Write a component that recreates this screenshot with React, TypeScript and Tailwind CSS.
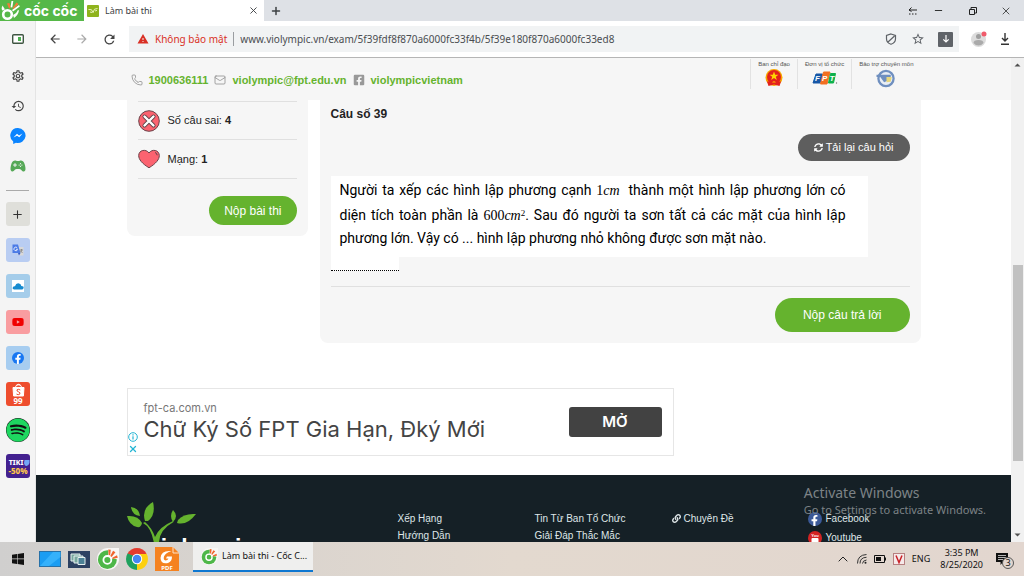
import type { ReactNode } from "react";
import { FaFacebookF, FaFacebookSquare, FaLink, FaSpotify, FaSyncAlt, FaYoutube } from "react-icons/fa";
import { IoGameController } from "react-icons/io5";
import {
  MdArrowBack,
  MdArrowForward,
  MdHistory,
  MdOutlineSettings,
  MdRefresh,
  MdStarBorder,
  MdWarning,
} from "react-icons/md";
import { Mail, Minus, Phone, Plus, X } from "lucide-react";

const footerLinks = [
  ["Xếp Hạng", "Hướng Dẫn"],
  ["Tin Từ Ban Tổ Chức", "Giải Đáp Thắc Mắc"],
];

// colour version for the taskbar, white line version for the tab strip badge
function CocCocMark({ className, white = false }: { className?: string; white?: boolean }) {
  if (white) {
    return (
      <svg viewBox="0 0 20 20" className={className} aria-hidden="true">
        <circle cx="7.500" cy="13.500" r="4.300" fill="none" stroke="#fff" strokeWidth="2.600" />
        <path d="M2 9.500Q1 7 2.500 4.500L5 8.500z" fill="#fff" />
        <path d="M11.500 0l1.800 0-1 6.500-1.800-.3zM12 9l7-5 .8 1.500-6.800 5zM13 14q4-2 5-5l1 .5q-1 5-5 7.500z" fill="#fff" />
        <path d="M7 2.500l2.500-.5 1 5-1.500.5zM12.500 7.200L16.500 1.500l2 1.500-5 5z" fill="#f4793a" />
      </svg>
    );
  }
  return (
    <svg viewBox="0 0 24 24" className={className} aria-hidden="true">
      <circle cx="12" cy="12" r="12" fill="#f7f7f5" />
      <circle cx="11.300" cy="12.700" r="10.300" fill="#4db748" />
      <path d="M12 11L12.500 0 24 0V12.500z" fill="#f7f7f5" />
      <circle cx="11.300" cy="13" r="4.300" fill="#4db748" stroke="#fff" strokeWidth="2" />
      <path d="M12.300 1.500l2.700.3-.7 6-1.600-.2zM17.500 3l2.600 1.700-4.200 5-1.400-1zM21.800 8l.9 2.500-5.500 1.500-.5-1.500z" fill="#f0642d" />
    </svg>
  );
}

function TabStrip() {
  return (
    <div className="flex h-[21px] shrink-0 items-stretch bg-[#dee1e6] text-[#3c4043]">
      <div className="flex w-[84px] items-center gap-1 overflow-hidden bg-[#56b848] text-white">
        <CocCocMark white className="size-5" />
        <span className="font-['Inter',sans-serif] text-[14px] leading-none font-bold">cốc cốc</span>
      </div>
      <div className="flex w-[180px] items-center gap-[6px] bg-white pr-[5px] pl-[3px]">
        <svg viewBox="0 0 12 12" className="size-3" aria-hidden="true">
          <rect width="12" height="12" rx="1" fill="#8fb31d" />
          <path d="M1.500 4.500l3 .2 1.500 3 1.500-3.500 3-.7M3 7l2 .5M8 6l2-.6" stroke="#e6f2b8" strokeWidth="1" fill="none" />
        </svg>
        <span className="flex-1 text-[9px]">Làm bài thi</span>
        <button aria-label="Đóng thẻ">
          <X className="size-[11px]" />
        </button>
      </div>
      <button aria-label="Thẻ mới" className="px-[6px]">
        <Plus className="size-3" strokeWidth={3} />
      </button>
      <div className="ml-auto flex items-center gap-[14px] pr-3 text-[#222]">
        <svg viewBox="0 0 12 12" className="size-3" aria-hidden="true">
          <path d="M2 5h8M4.500 2.500L2 5l2.500 1.500M2 9h1.500M5 9h1.500M8 9h1.500" stroke="currentColor" fill="none" />
        </svg>
        <button aria-label="Thu nhỏ">
          <Minus className="size-[11px]" strokeWidth={2} />
        </button>
        <button aria-label="Khôi phục" className="ml-[10px]">
          <svg viewBox="0 0 10 10" className="size-[10px]">
            <path d="M1.500 3.500h5v5h-5zM3 3.500V1.500h5.500V7H6.500" stroke="currentColor" fill="none" />
          </svg>
        </button>
        <button aria-label="Đóng" className="ml-2">
          <X className="size-3" strokeWidth={1.5} />
        </button>
      </div>
    </div>
  );
}

function AddressBar() {
  return (
    <div className="flex h-[37px] shrink-0 items-center border-b border-[#b5b5b5] bg-white pr-[13px] text-[#5f6368]">
      <div className="flex w-[93px] items-center gap-[13px] pl-3">
        <button aria-label="Quay lại">
          <MdArrowBack className="size-[14px] text-[#444]" />
        </button>
        <button aria-label="Tiến">
          <MdArrowForward className="size-[14px] text-[#aaa]" />
        </button>
        <button aria-label="Tải lại">
          <MdRefresh className="size-[15px] text-[#444]" />
        </button>
      </div>
      <div className="flex h-[26px] flex-1 items-center bg-[#f1f3f4] pr-[6px] pl-2 text-[10px]">
        <MdWarning className="size-3 text-[#d93025]" />
        <span className="ml-[6px] text-[#d93025]">Không bảo mật</span>
        <span className="mx-[6px] h-[14px] w-px bg-[#9a9da1]" />
        <input
          aria-label="Địa chỉ"
          readOnly
          className="min-w-0 flex-1 bg-transparent text-[#4a4d51] outline-none"
          defaultValue="www.violympic.vn/exam/5f39fdf8f870a6000fc33f4b/5f39e180f870a6000fc33ed8"
        />
        <svg viewBox="0 0 12 12" className="mx-[7px] size-3" aria-hidden="true">
          <path d="M6 1l4.500 1.500v3.300C10.500 8.500 8.500 10.500 6 11.300 3.500 10.500 1.500 8.500 1.500 5.800V2.500zM3 9l6.500-6" stroke="currentColor" strokeWidth="1.200" fill="none" />
        </svg>
        <button aria-label="Đánh dấu trang" className="mx-[7px]">
          <MdStarBorder className="size-[14px]" />
        </button>
        <button aria-label="Tải video" className="ml-[6px] flex size-[15px] items-center justify-center rounded-[1px] bg-[#5f6368]">
          <svg viewBox="0 0 10 10" className="size-[10px]">
            <path d="M5 1v7M2.300 5.300L5 8l2.700-2.700" stroke="#fff" strokeWidth="1.200" fill="none" />
          </svg>
        </button>
      </div>
      <svg viewBox="0 0 16 16" className="ml-3 size-4" aria-hidden="true">
        <circle cx="7.500" cy="8.500" r="7.500" fill="#dcdcdc" />
        <circle cx="7.500" cy="5.500" r="2.500" fill="#9e9e9e" />
        <path d="M2.500 12q0-3 5-3t5 3q-2 2.500-5 2.500t-5-2.500" fill="#aaa" />
        <circle cx="13" cy="3" r="2.500" fill="#f05b6b" />
      </svg>
      <button aria-label="Tải xuống" className="ml-3">
        <svg viewBox="0 0 12 12" className="size-3">
          <path d="M6 0v8M3 5l3 3 3-3M2 11.200h8" stroke="#333" strokeWidth="1.400" fill="none" />
        </svg>
      </button>
    </div>
  );
}

function SideTool({ label, children }: { label: string; children: ReactNode }) {
  return (
    <button aria-label={label} className="flex h-[30px] items-center justify-center text-[#444]">
      {children}
    </button>
  );
}

function Sidebar() {
  const tile = "flex size-6 shrink-0 items-center justify-center overflow-hidden rounded-[3px]";
  return (
    <aside className="flex w-9 shrink-0 flex-col border-r border-[#e4e4e4] bg-[#f4f4f4]">
      <button aria-label="Thanh bên" className="mb-1 flex h-9 shrink-0 items-center justify-center">
        <svg viewBox="0 0 12 10" className="h-[10px] w-3">
          <rect x=".7" y=".7" width="10.600" height="8.600" rx="1" stroke="#3f5542" strokeWidth="1.400" fill="#fff" />
          <rect x="6" y="3" width="3" height="4" fill="#4caf50" />
        </svg>
      </button>
      <SideTool label="Cài đặt">
        <MdOutlineSettings className="size-[14px]" />
      </SideTool>
      <SideTool label="Lịch sử">
        <MdHistory className="size-[14px]" />
      </SideTool>
      <SideTool label="Messenger">
        <svg viewBox="0 0 16 16" className="size-4">
          <path d="M8 0a7.800 7.500 0 1 1-2 14.800L3.200 16v-2.600A7.500 7.500 0 0 1 8 0z" fill="#0a84ff" />
          <path d="M3.500 9.500L7 5.800l2 1.700 3.500-2L9.300 9.300 7 7.700z" fill="#fff" />
        </svg>
      </SideTool>
      <SideTool label="Trò chơi">
        <IoGameController className="size-4 text-[#55a857]" />
      </SideTool>
      <hr className="mx-[6px] mt-[9px] mb-[11px] border-[#aaa]" />
      <div className="flex flex-col items-center gap-3">
        <button aria-label="Thêm" className={`${tile} bg-[#dfdfda]`}>
          <Plus className="size-[13px] text-[#333]" />
        </button>
        <button aria-label="Google Dịch" className={`${tile} bg-[#b9cdf2]`}>
          <svg viewBox="0 0 12 12" className="size-3">
            <path d="M5 3h6.500v8.500H7z" fill="#d8d8d8" />
            <path d="M.5.500h5.500l2.500 8.500H.500z" fill="#4c7be6" />
            <path d="M5.300 4A1.800 1.800 0 1 0 5.500 5.300H4" stroke="#fff" strokeWidth=".8" fill="none" />
            <path d="M8 6h3M9.500 5v1q-.5 2-1.500 2.500M8.700 7l1.800 2" stroke="#777" strokeWidth=".7" fill="none" />
            <path d="M6 9h2.500L7 11.500z" fill="#3058c7" />
          </svg>
        </button>
        <button aria-label="Thời tiết" className={`${tile} bg-[#a5cdea]`}>
          <svg viewBox="0 0 12 12" className="size-3">
            <rect width="12" height="12" fill="#fff" />
            <path d="M2 9.500Q0 9 .8 7.200 1.500 6 3 6.200 4 2.800 7 3.400q2 .4 2.300 2.700Q12 6.200 11.600 8q-.3 1.500-2 1.500z" fill="#168bd0" />
          </svg>
        </button>
        <button aria-label="YouTube" className={`${tile} bg-[#f99da0]`}>
          <FaYoutube className="size-3 text-[#f00000]" />
        </button>
        <button aria-label="Facebook" className={`${tile} bg-[#a7cdf0]`}>
          <span className="flex size-3 items-end justify-center rounded-full bg-[#1877f2]">
            <FaFacebookF className="size-[10px] text-white" />
          </span>
        </button>
        <button aria-label="Shopee" className={`${tile} bg-[#ee4d2d]`}>
          <svg viewBox="0 0 24 24" className="size-6">
            <path d="M7 5.500h11l-.6 8.500H7.600zM9.500 5.500Q10 2.300 12.500 2.300T15.500 5.500" fill="#fff" stroke="#fff" />
            <path d="M9.800 5Q10.500 3.200 12.500 3.200t2.700 1.800" fill="#ee4d2d" />
            <path d="M14.300 8Q12.500 6.800 11 7.800q-.5 1.500 1.500 2 2.200.8 1.300 2.300-1.500 1.200-3.300 0" fill="none" stroke="#ee4d2d" />
            <text x="12" y="22" textAnchor="middle" fontSize="8" fontWeight="700" fill="#fff">99</text>
          </svg>
        </button>
        <button aria-label="Spotify" className="flex size-6 items-center justify-center rounded-full bg-[#111]">
          <FaSpotify className="size-6 text-[#1ed760]" />
        </button>
        <button aria-label="Tiki" className={`${tile} bg-[#43218f]`}>
          <svg viewBox="0 0 24 24" className="size-6">
            <path d="M18.500 6h5v3q-1 3-3 3t-2.500-3z" fill="#74a7f5" />
            <text x="10" y="11" textAnchor="middle" fontSize="7" fontWeight="800" fill="#fff">TIKI</text>
            <text x="12" y="20" textAnchor="middle" fontSize="8" fontWeight="800" fill="#fdc64b">-50%</text>
          </svg>
        </button>
      </div>
    </aside>
  );
}

function Partner({ label, children }: { label: string; children: ReactNode }) {
  return (
    <div className="flex h-[30px] flex-col items-center border-l border-[#e2e2e2] px-[7px]">
      <span className="text-[6px] leading-[10px] text-[#555]">{label}</span>
      {children}
    </div>
  );
}

function SiteHeader() {
  return (
    <header className="h-[42px] shrink-0 bg-[#f6f6f6]">
      <div className="mx-auto flex max-w-[794px] items-start justify-between pl-1">
        <div className="flex items-center gap-[6px] pt-[13px] text-[11px] leading-[18px] font-bold text-[#65b32e]">
          <Phone className="size-3 text-[#888]" strokeWidth={1.5} />
          <a href="tel:1900636111">1900636111</a>
          <Mail className="size-3 text-[#888]" strokeWidth={1.5} />
          <a href="mailto:violympic@fpt.edu.vn">violympic@fpt.edu.vn</a>
          <FaFacebookSquare className="size-3 text-[#999]" />
          <a href="#facebook">violympicvietnam</a>
        </div>
        <div className="flex pt-px">
          <Partner label="Ban chỉ đạo">
            <svg viewBox="0 0 18 18" className="size-[18px]">
              <circle cx="9" cy="8.500" r="8.500" fill="#f6a800" />
              <circle cx="9" cy="8" r="7" fill="#e3211c" />
              <path d="M9 2.500l1.200 3.200h3.200l-2.600 2 1 3.200L9 9l-2.800 1.900 1-3.200-2.600-2h3.200z" fill="#ffd500" />
              <path d="M2 12.500h14l-1.500 4.500L9 15.500 3.500 17z" fill="#e3211c" />
              <path d="M7 13.500q2-2.500 4 0" fill="#ffb700" />
            </svg>
          </Partner>
          <Partner label="Đơn vị tổ chức">
            <svg viewBox="0 0 26 18" className="h-[18px] w-[26px]">
              <path d="M4 5h6.500L8 14H1z" fill="#1657a6" stroke="#1657a6" strokeLinejoin="round" />
              <path d="M11.500 3h6.500l-3 12H8.500z" fill="#f26f21" stroke="#f26f21" strokeLinejoin="round" />
              <path d="M18.500 4.500h5L21.500 14h-5z" fill="#0db14b" stroke="#0db14b" strokeLinejoin="round" />
              <g fill="#fff" fontSize="8" fontWeight="700" fontStyle="italic">
                <text x="3" y="12">F</text>
                <text x="10" y="12">P</text>
                <text x="17.500" y="12">T</text>
              </g>
              <circle cx="24.500" cy="14" r=".7" fill="#777" />
            </svg>
          </Partner>
          <Partner label="Bảo trợ chuyên môn">
            <svg viewBox="0 0 20 20" className="h-[19px] w-5">
              <circle cx="10" cy="10" r="8" fill="#e9eef5" stroke="#6f8fbf" strokeWidth="2.400" />
              <path d="M0 6h15v2.500H0zM4 8.500h7v4L8 14z" fill="#6f8fbf" />
              <path d="M10.500 8.500h5.500l-1 5-4.500.5z" fill="#e8d77c" />
            </svg>
          </Partner>
        </div>
      </div>
    </header>
  );
}

function StatusCard() {
  return (
    <section className="flex w-[181px] shrink-0 flex-col self-start rounded-b-lg bg-[#f6f6f6] px-[11px] pb-[11px] text-[11px] text-[#222]">
      <div className="mt-px flex h-[39px] items-center gap-2 border-y border-[#e0e0e0]">
        <svg viewBox="0 0 22 22" className="size-[22px]" aria-hidden="true">
          <circle cx="11" cy="11" r="10.300" fill="#fb6370" stroke="#6b444b" />
          <path d="M6.500 6.500l9 9m0-9l-9 9" stroke="#5c4449" strokeWidth="4" strokeLinecap="round" />
          <path d="M6.500 6.500l9 9m0-9l-9 9" stroke="#fff" strokeWidth="2.400" strokeLinecap="round" />
        </svg>
        <p>
          Số câu sai: <b>4</b>
        </p>
      </div>
      <div className="flex h-[39px] items-center gap-2 border-b border-[#e0e0e0]">
        <svg viewBox="0 0 22 20" className="h-5 w-[22px]" aria-hidden="true">
          <path d="M11 18.800C4 14.500.7 10.500.7 6.500.7 1 8 -.5 11 4c3-4.500 10.300-3 10.300 2.500 0 4-3.300 8-10.300 12.300z" fill="#fb6370" stroke="#6b444b" />
          <path d="M17 3.500q2 .6 2.200 2.800" stroke="#5c4449" fill="none" />
        </svg>
        <p>
          Mạng: <b>1</b>
        </p>
      </div>
      <button className="mt-[17px] h-[29px] self-end rounded-full bg-[#65b32e] px-[15px] text-[12px] text-white">
        Nộp bài thi
      </button>
    </section>
  );
}

function QuestionCard() {
  return (
    <section className="flex min-w-0 flex-1 flex-col rounded-b-lg bg-[#f6f6f6] px-[11px] pb-[11px]">
      <h1 className="mt-[5px] text-[12px] leading-[18px] font-bold text-[#222]">Câu số 39</h1>
      <button className="mt-[11px] flex h-[27px] items-center gap-[3px] self-end rounded-full bg-[#5e5e5e] px-4 text-[11px] text-white">
        <FaSyncAlt className="size-[9px]" />
        Tải lại câu hỏi
      </button>
      <div className="mt-[15px] mr-[42px] bg-white pt-[3px] pr-[22px] pb-2 pl-[9px]">
        <p className="text-justify font-['Roboto',sans-serif] text-[14px] leading-[22px] text-black">
          Người ta xếp các hình lập phương cạnh{" "}
          <span className="mr-1 font-['Liberation_Serif',serif]">
            1<i>cm</i>
          </span>{" "}
          thành một hình lập phương lớn có diện tích toàn phần là{" "}
          <span className="inline-block pt-[3px] font-['Liberation_Serif',serif] whitespace-nowrap">
            600<i>cm</i>
            <sup className="text-[9px]">2</sup>
          </span>
          . Sau đó người ta sơn tất cả các mặt của hình lập phương lớn. Vậy có ... hình lập phương nhỏ không được sơn
          mặt nào.
        </p>
      </div>
      <input
        aria-label="Câu trả lời"
        className="h-[14px] w-[68px] border-b border-dotted border-black bg-white text-[11px] outline-none"
      />
      <hr className="mt-[15px] border-[#e0e0e0]" />
      <button className="mt-[11px] h-[34px] self-end rounded-full bg-[#65b32e] px-7 text-[12px] text-white">
        Nộp câu trả lời
      </button>
    </section>
  );
}

function AdBanner() {
  return (
    <div className="mt-[45px] flex h-[68px] max-w-[547px] items-center border border-[#e6e6e6] pr-[11px] font-['Inter',sans-serif]">
      <div className="flex w-4 flex-col items-center gap-[2px] self-end pr-[5px] pb-px text-[#24b5d4]">
        <svg viewBox="0 0 10 10" className="size-[10px]" aria-hidden="true">
          <circle cx="5" cy="5" r="4.300" stroke="currentColor" fill="none" />
          <path d="M5 4.200v3.300M5 2.300v1.200" stroke="currentColor" strokeWidth="1.200" />
        </svg>
        <button aria-label="Đóng quảng cáo">
          <X className="size-[10px]" strokeWidth={3} />
        </button>
      </div>
      <div className="flex-1 text-[#444]">
        <p className="text-[11px] leading-[14px] text-[#777]">fpt-ca.com.vn</p>
        <p className="text-[22px] leading-7">Chữ Ký Số FPT Gia Hạn, Đký Mới</p>
      </div>
      <button className="h-[30px] w-[93px] rounded-[3px] bg-[#424242] text-[15px] font-semibold text-white">MỞ</button>
    </div>
  );
}

function SiteFooter() {
  return (
    <footer className="mt-[19px] min-h-0 flex-1 overflow-hidden bg-[#152026] text-[10px] leading-[17px] text-[#dfe6e8]">
      <div className="mx-auto grid max-w-[794px] grid-cols-[271px_137px_137px_136px_1fr]">
        <svg viewBox="0 0 120 60" className="mt-[26px] h-[60px] w-[120px]">
          <g fill="#65b32e">
            <path d="M27 42Q24 26 16 22l2-1q7 6 10 15 4-10 18-16l.5 1Q32 29 32 42z" />
            <path d="M26 1q3 13-5 19l-3 0Q14 8 26 1z" />
            <path d="M0 15q11-1 15 7-1 5-5 4Q2 24 0 15z" />
            <path d="M4 6q8 1 9 9-8-1-9-9z" />
            <path d="M69 13q-12-1-18 6l-1 3q10 3 19-9z" />
            <path d="M46 9q-4 6 0 12 6-6 0-12z" />
          </g>
          <text x="21" y="55" fontSize="23" fontWeight="700" fill="#fff">violympic</text>
        </svg>
        {footerLinks.map((col) => (
          <nav key={col[0]} className="flex flex-col items-start pt-[35px]">
            {col.map((link) => (
              <a key={link} href="#">
                {link}
              </a>
            ))}
          </nav>
        ))}
        <nav className="pt-[35px]">
          <a href="#" className="flex items-center gap-[3px]">
            <FaLink className="size-[9px]" />
            Chuyên Đề
          </a>
        </nav>
        <nav className="flex flex-col items-start gap-[2px] pt-[35px]">
          <a href="#" className="flex items-center gap-1">
            <span className="flex size-[14px] items-end justify-center rounded-full bg-[#3b5998]">
              <FaFacebookF className="size-[11px] text-white" />
            </span>
            Facebook
          </a>
          <a href="#" className="flex items-center gap-1">
            <svg viewBox="0 0 14 14" className="size-[14px]">
              <circle cx="7" cy="7" r="7" fill="#d32323" />
              <text x="7" y="6" textAnchor="middle" fontSize="4" fontWeight="700" fill="#fff">You</text>
              <rect x="3.500" y="7" width="7" height="4.500" rx="1" fill="#fff" />
            </svg>
            Youtube
          </a>
        </nav>
      </div>
    </footer>
  );
}

function Scrollbar() {
  return (
    <div className="flex w-[13px] shrink-0 flex-col items-center bg-[#f1f1f1]">
      <svg viewBox="0 0 13 14" className="h-[14px] w-[13px]" aria-hidden="true">
        <path d="M3.500 8.500l3-3 3 3z" fill="#505050" />
      </svg>
      <div className="flex-[193]" />
      <div className="w-[10px] flex-[196] bg-[#c1c1c1]" />
      <div className="flex-[67]" />
      <svg viewBox="0 0 13 14" className="h-[14px] w-[13px]" aria-hidden="true">
        <path d="M3.500 5.500l3 3 3-3z" fill="#505050" />
      </svg>
    </div>
  );
}

function Taskbar() {
  return (
    <div className="flex h-[34px] shrink-0 items-center bg-linear-to-r from-[#d0cfce] via-[#e3d9cf] to-[#e2d6cf] text-[#111]">
      <div className="flex items-center gap-[7px] pl-3">
        <button aria-label="Bắt đầu">
          <svg viewBox="0 0 12 12" className="size-3">
            <path d="M0 1.700L5 1v4.600H0zM5.600.900L12 0v5.600H5.600zM0 6.300h5V11l-5-.7zM5.600 6.300H12V12l-6.400-.9z" fill="#111" />
          </svg>
        </button>
        <button aria-label="Màn hình" className="ml-2">
          <svg viewBox="0 0 22 16" className="h-4 w-[22px]">
            <rect x=".5" y=".5" width="21" height="15" fill="#1b9df2" stroke="#2771a8" />
            <path d="M1 15L14 1h7.500v5L10 15z" fill="#35b1fb" />
          </svg>
        </button>
        <button aria-label="Chuyển cửa sổ">
          <svg viewBox="0 0 22 17" className="h-[17px] w-[22px]">
            <rect width="22" height="17" fill="#2d4162" />
            <path d="M3 3h9v7H3z" fill="#79a89e" stroke="#e7f0f0" />
            <path d="M6 5h9v7H6z" fill="#79a89e" stroke="#e7f0f0" />
            <path d="M10 6.500h7v7h-7z" fill="#4c8196" stroke="#e7f0f0" />
          </svg>
        </button>
        <button aria-label="Cốc Cốc">
          <CocCocMark className="size-[22px]" />
        </button>
        <button aria-label="Chrome">
          <svg viewBox="0 0 22 22" className="size-[22px]">
            <path d="M11 11L1.500 5.500A11 11 0 0 1 20.500 5.500z" fill="#e33b2e" />
            <path d="M11 11V22A11 11 0 0 1 1.500 5.500z" fill="#1fa15d" />
            <path d="M11 11l9.500-5.500A11 11 0 0 1 11 22z" fill="#fdd00f" />
            <path d="M11 6h9.800q.6 2 0 7L15.500 14z" fill="#fdd00f" />
            <path d="M6.500 13.500L1.500 5.500 8 8z" fill="#1fa15d" />
            <circle cx="11" cy="11" r="5.200" fill="#fff" />
            <circle cx="11" cy="11" r="4.200" fill="#4587f3" />
          </svg>
        </button>
        <button aria-label="Foxit PDF">
          <svg viewBox="0 0 24 24" className="size-6">
            <path d="M0 0h18l6 6v18H0z" fill="#f58220" />
            <path d="M18 0v6h6" fill="none" stroke="#fde2c8" />
            <path d="M16.500 4Q6 3 5.500 11q.3 6.500 7.500 5 4-1.500 4-6.500h-5l-1 2h2.500q-.8 2-3 2-2.500-.5-1.500-4 1.500-4 7.500-5.500z" fill="#fff" />
            <text x="12" y="23" textAnchor="middle" fontSize="6" fontWeight="700" fill="#fff">PDF</text>
          </svg>
        </button>
      </div>
      <button className="ml-[14px] flex h-[30px] w-[120px] items-center gap-1 self-start border-b-2 border-[#0e77d1] bg-[#efefee] pl-2 text-[9px] whitespace-nowrap">
        <CocCocMark className="size-[17px]" />
        Làm bài thi - Cốc C...
      </button>
      <div className="ml-auto flex items-center gap-[7px] pr-4 text-[9px] leading-[12px]">
        <svg viewBox="0 0 10 6" className="h-[6px] w-[10px]" aria-hidden="true">
          <path d="M.7 5.300L5 1l4.300 4.300" stroke="#222" fill="none" />
        </svg>
        <svg viewBox="0 0 10 10" className="ml-[2px] size-[10px]" aria-hidden="true">
          <path d="M.5 9.500Q.5 1 9.500.5M3 9.500Q3 3.500 9.500 3.300M5.500 9.500Q5.700 6.500 9.500 6" stroke="#333" fill="none" />
          <circle cx="8.500" cy="8.800" r="1" fill="#222" />
        </svg>
        <svg viewBox="0 0 12 8" className="h-2 w-3" aria-hidden="true">
          <path d="M.5.500h10v7H.5z" stroke="#111" fill="none" />
          <path d="M2 2h5v4H2zM10.500 2.500H12v3h-1.500z" fill="#111" />
        </svg>
        <svg viewBox="0 0 12 12" className="size-3" aria-hidden="true">
          <rect x=".5" y=".5" width="11" height="11" fill="#f6e9e9" stroke="#b78080" />
          <path d="M3 2.500l3 7 3-7" stroke="#c92127" strokeWidth="1.500" fill="none" />
        </svg>
        <span>ENG</span>
        <div className="ml-[3px] text-center">
          <p>3:35 PM</p>
          <p>8/25/2020</p>
        </div>
        <button aria-label="Thông báo" className="relative ml-[6px]">
          <svg viewBox="0 0 12 13" className="h-[13px] w-3">
            <path d="M0 0h12v9H7l-2.500 3V9H0z" fill="#111" />
            <path d="M2 2.500h8M2 4.500h8M2 6.500h5" stroke="#ddd" strokeWidth=".8" />
          </svg>
          <span className="absolute top-1 left-[6px] flex size-3 items-center justify-center rounded-full border border-[#555] bg-[#e2d6cf] text-[9px]">
            3
          </span>
        </button>
      </div>
    </div>
  );
}

export default function App() {
  return (
    <div className="flex h-screen flex-col overflow-hidden bg-white font-['Noto_Sans',sans-serif]">
      <TabStrip />
      <div className="flex min-h-0 flex-1">
        <Sidebar />
        <div className="flex min-w-0 flex-1 flex-col">
          <AddressBar />
          <div className="relative flex min-h-0 flex-1">
            <div className="flex min-w-0 flex-1 flex-col overflow-hidden font-['Liberation_Sans',Arial,sans-serif]">
              <SiteHeader />
              <main className="mx-auto w-full max-w-[794px] shrink-0">
                <div className="flex gap-3">
                  <StatusCard />
                  <QuestionCard />
                </div>
                <AdBanner />
              </main>
              <SiteFooter />
            </div>
            <Scrollbar />
            <div className="pointer-events-none absolute right-[38px] bottom-6 text-[#7d8386]">
              <p className="text-[14px] leading-[18px]">Activate Windows</p>
              <p className="text-[11px] leading-[16px]">Go to Settings to activate Windows.</p>
            </div>
          </div>
        </div>
      </div>
      <Taskbar />
    </div>
  );
}
